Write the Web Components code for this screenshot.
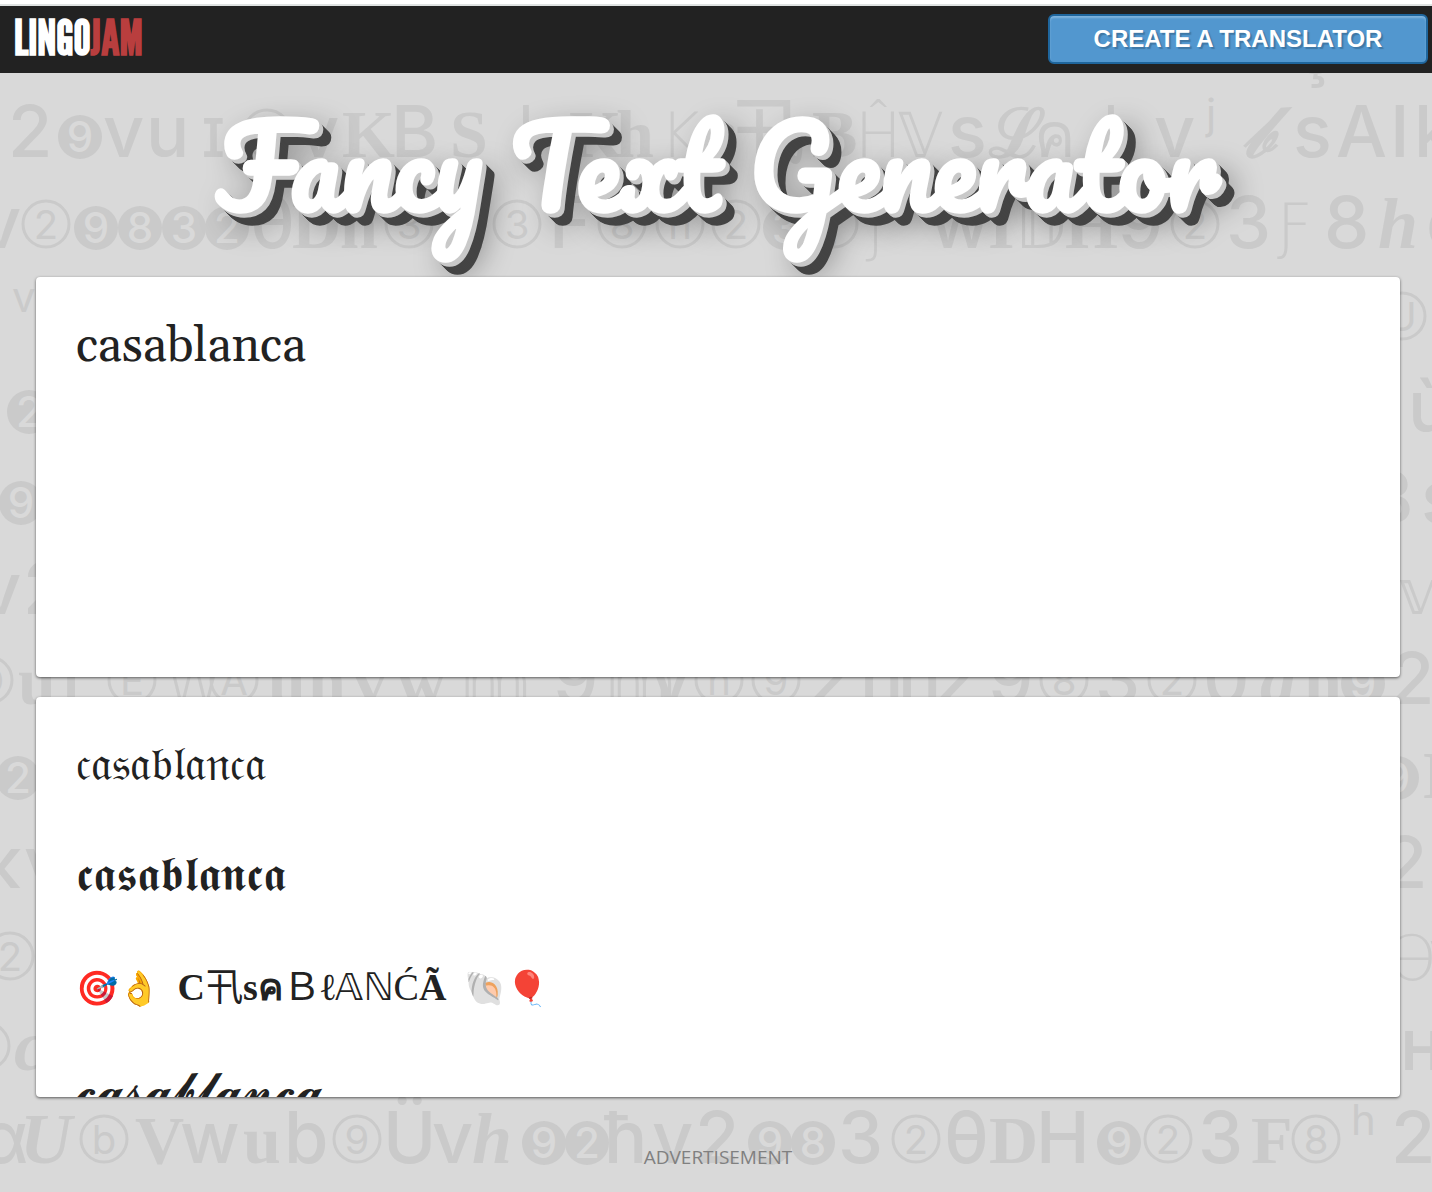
<!DOCTYPE html>
<html lang="en">
<head>
<meta charset="utf-8">
<title>Fancy Text Generator</title>
<style>
  body {
    margin: 0;
    background: #d9d9d9;
    color: #222;
    font-family: "Liberation Sans", Arial, sans-serif;
  }
</style>
</head>
<body>
<lingo-page>
  <lingo-header slot="header"></lingo-header>
  <fancy-title>Fancy Text Generator</fancy-title>
  <text-input value="casablanca"></text-input>
  <text-output>
    <fancy-line>𝔠𝔞𝔰𝔞𝔟𝔩𝔞𝔫𝔠𝔞</fancy-line>
    <fancy-line>𝖈𝖆𝖘𝖆𝖇𝖑𝖆𝖓𝖈𝖆</fancy-line>
    <fancy-line kind="mixed"><i>🎯👌</i> <b>C</b>卂<b>sค</b>Ｂ<b>ℓ</b>𝔸ℕĆ<b>Ã</b> <i>🐚🎈</i></fancy-line>
    <fancy-line kind="script">𝓬𝓪𝓼𝓪𝓫𝓵𝓪𝓷𝓬𝓪</fancy-line>
  </text-output>
  <ad-label>ADVERTISEMENT</ad-label>
</lingo-page>

<script>
// each row: [baseline, "x glyph style" ...]
// styles: s sans, b bold serif, i bold italic serif, t thin, o circled, f filled circle, u superscript
const ROWS = [
  [73, "1296 ş s"],
  [157, "8 2 s|58 9 f|103 v s|146 u s|200 ɪ s|243 D o|298 v s|342 K b|391 B s|450 S b|516 | s|569 K b|616 h b|660 K t|704 ę i|732 卂 s|812 B b|855 Ĥ t|898 𝕍 t|948 s s|989 ℒ b|1034 ค t|1101 | s|1154 v s|1206 j u|1242 𝒷 i|1293 s s|1336 A s|1390 I s|1414 k s"],
  [248, "-20 v s|22 2 o|74 9 f|118 8 f|162 3 f|205 2 f|250 θ s|292 D b|340 h b|385 3 o|440 Z s|493 3 o|549 F s|598 8 o|656 n o|712 2 o|763 3 f|810 j o|866 ƒ t|930 w s|988 I b|1015 𝔻 t|1065 H b|1118 9 s|1171 2 o|1226 3 s|1277 Ƒ t|1324 8 s|1378 h i|1426 o s"],
  [340, "-16 j u|12 v u|1378 U o"],
  [432, "7 2 f|1408 ù s"],
  [523, "-1 9 f|1366 B s|1421 s s"],
  [614, "-20 v s|23 2 s|1398 𝕧 t"],
  [704, "-35 O o|18 u b|62 ı s|108 E o|164 W t|210 A o|268 u b|308 n b|353 v b|397 w b|460 𝕞 t|515 ˜ s|553 9 s|605 𝕞 t|650 v s|695 n o|752 9 o|808 2 s|860 h s|898 n s|934 2 s|988 9 s|1040 8 o|1095 3 s|1148 2 o|1203 0 s|1260 a i|1304 n b|1341 9 f|1390 2 s"],
  [798, "-4 2 f|1375 9 f|1422 I b"],
  [888, "-18 κ s|24 v s|1383 2 s|1430 - s"],
  [980, "-14 2 o|1388 Ə t|1429 v s"],
  [1070, "-38 D o|14 c i|1400 ʜ s"],
  [1163, "-20 α s|20 U i|80 b o|135 V b|180 w s|243 u b|284 b s|333 9 o|383 Ü s|432 v s|472 h i|522 9 f|565 2 f|604 ħ s|652 v s|695 2 s|748 9 f|791 8 f|838 3 s|892 2 o|944 θ s|989 D b|1036 H s|1097 9 f|1144 2 o|1198 3 s|1251 F b|1292 8 o|1351 h u|1391 2 s"],
];

class GlyphBackdrop extends HTMLElement {
  constructor() {
    super();
    this.attachShadow({mode: "open"});
  }

  glyph(item, y) {
    const parts = item.trim().split(" ");
    const x = Number(parts[0]);
    if (parts[2] === "o") {
      return `<circle class="ring" cx="${x + 24}" cy="${y - 24}" r="23"/>
        <text class="in" x="${x + 24}" y="${y - 9}">${parts[1]}</text>`;
    }
    if (parts[2] === "f") {
      return `<circle cx="${x + 22}" cy="${y - 20}" r="22"/>
        <text class="out" x="${x + 22}" y="${y - 5}">${parts[1]}</text>`;
    }
    const top = parts[2] === "u" ? y - 28 : y;
    return `<text class="${parts[2]}" x="${x}" y="${top}">${parts[1]}</text>`;
  }

  connectedCallback() {
    const art = ROWS.map(([y, row]) => {
      // the bar glyph is also the separator, so it is swapped first
      const items = row.replace(/(\d+) \| s/g, "$1 ǀ s").split("|");
      return items.map((item) => this.glyph(item, y)).join("");
    }).join("");
    this.shadowRoot.innerHTML = `
      <style>
        :host {
          display: block;
          position: absolute;
          inset: 0;
          overflow: hidden;
          pointer-events: none;
          z-index: -1;
        }
        svg { display: block; overflow: visible; }
        svg * { fill: #cacaca; }
        text { font: 500 72px Inter, "DejaVu Sans", "Noto Sans CJK SC", sans-serif; }
        .b { font-family: "Liberation Serif", serif; font-weight: bold; font-size: 68px; }
        .i { font-family: "Liberation Serif", serif; font-weight: bold; font-style: italic; font-size: 72px; }
        .t { font-family: "DejaVu Sans", sans-serif; font-weight: 200; font-size: 62px; }
        .u { font-size: 42px; font-weight: 400; }
        .in { font-size: 40px; font-weight: 400; text-anchor: middle; }
        svg .out { font-size: 42px; text-anchor: middle; fill: #d9d9d9; }
        svg .ring { fill: none; stroke: #cacaca; stroke-width: 3; }
      </style>
      <svg width="1432" height="1192" aria-hidden="true">${art}</svg>
    `;
  }
}

class LingoPage extends HTMLElement {
  constructor() {
    super();
    this.attachShadow({mode: "open"});
  }
  connectedCallback() {
    this.shadowRoot.innerHTML = `
      <style>
        :host {
          display: block;
          position: relative;
          min-height: 100vh;
          overflow: hidden;
          z-index: 0;
        }
        main {
          display: flex;
          flex-direction: column;
          gap: 20px;
          padding: 0 32px 20px 36px;
        }
      </style>
      <glyph-backdrop></glyph-backdrop>
      <slot name="header"></slot>
      <main><slot></slot></main>
    `;
  }
}

class LingoHeader extends HTMLElement {
  constructor() {
    super();
    this.attachShadow({mode: "open"});
  }
  connectedCallback() {
    this.shadowRoot.innerHTML = `
      <style>
        :host {
          display: block;
          border-top: 4px solid #fff;
        }
        header {
          box-sizing: border-box;
          height: 69px;
          padding: 0 4px 0 14px;
          border-top: 2px solid #dfe3e2;
          background: #222;
          display: flex;
          align-items: center;
          justify-content: space-between;
        }
        a { text-decoration: none; color: #fff; }
        .logo {
          padding-bottom: 4px;
          font: bold 48px/60px "League Gothic", "Bebas Neue", Anton, Oswald, Impact, "Fjalla One", "Roboto Condensed", "Open Sans Condensed", sans-serif;
        }
        .logo span { color: #b93e3e; }
        .create {
          box-sizing: border-box;
          width: 380px;
          height: 50px;
          margin-bottom: 1px;
          border: 2px solid #1f669d;
          border-radius: 6px;
          background: #5297cf;
          box-shadow: inset 0 2px 2px #7fb3de;
          font-size: 24px;
          line-height: 46px;
          font-weight: bold;
          text-align: center;
          text-shadow: 2px 2px 1px #3f78a6;
        }
      </style>
      <header>
        <a class="logo" href="#">LINGO<span>JAM</span></a>
        <a class="create" href="#create">CREATE A TRANSLATOR</a>
      </header>
    `;
  }
}

class FancyTitle extends HTMLElement {
  constructor() {
    super();
    this.attachShadow({mode: "open"});
  }
  shadows() {
    const list = [];
    for (let i = 1; i <= 12; i++) {
      list.push(`${i}px ${i}px 0 ${i <= 4 ? "#c9c9c9" : "#444"}`);
    }
    list.push("12px 12px 30px rgba(0, 0, 0, 0.4)");
    return list.join(", ");
  }
  connectedCallback() {
    this.shadowRoot.innerHTML = `
      <style>
        :host { display: block; }
        h1 {
          margin: 0;
          padding: 12px 0;
          font: bold 108px/160px Pacifico, cursive;
          text-align: center;
          color: #fff;
          text-shadow: ${this.shadows()};
        }
      </style>
      <h1><slot></slot></h1>
    `;
  }
}

const CARD = `
  box-sizing: border-box;
  width: 100%;
  height: 400px;
  border: 0;
  border-radius: 4px;
  background: #fff;
  color: #222;
  box-shadow: 0 1px 3px rgba(0, 0, 0, 0.6);
`;

class TextInput extends HTMLElement {
  constructor() {
    super();
    this.attachShadow({mode: "open"});
  }
  connectedCallback() {
    this.shadowRoot.innerHTML = `
      <style>
        :host { display: block; }
        textarea {
          ${CARD}
          display: block;
          padding: 40px;
          outline: 0;
          resize: none;
          font: 48px/60px Georgia, Gelasio, "Liberation Serif", serif;
        }
      </style>
      <textarea aria-label="Your text" spellcheck="false"></textarea>
    `;
    this.shadowRoot.querySelector("textarea").value = this.getAttribute("value");
  }
}

class TextOutput extends HTMLElement {
  constructor() {
    super();
    this.attachShadow({mode: "open"});
  }
  connectedCallback() {
    this.shadowRoot.innerHTML = `
      <style>
        :host {
          ${CARD}
          display: flex;
          flex-direction: column;
          gap: 55px;
          padding: 40px;
          overflow: hidden;
        }
      </style>
      <slot></slot>
    `;
  }
}

class FancyLine extends HTMLElement {
  constructor() {
    super();
    this.attachShadow({mode: "open"});
  }
  connectedCallback() {
    this.shadowRoot.innerHTML = `
      <style>
        :host {
          display: block;
          flex: none;
          height: 56px;
          font: 48px/54px "Liberation Serif", "DejaVu Sans", "Noto Sans CJK SC", serif;
          white-space: nowrap;
        }
        :host([kind="mixed"]) { font-size: 38px; line-height: 56px; }
        :host([kind="script"]) { line-height: 40px; }
        ::slotted(i) {
          display: inline-block;
          font-size: 34px;
          font-style: normal;
          margin-right: 8px;
        }
        ::slotted(i:last-child) { margin: 0 0 0 8px; }
        ::slotted(b) { font-weight: bold; }
      </style>
      <slot></slot>
    `;
  }
}

class AdLabel extends HTMLElement {
  constructor() {
    super();
    this.attachShadow({mode: "open"});
  }
  connectedCallback() {
    this.shadowRoot.innerHTML = `
      <style>
        :host {
          display: block;
          padding-top: 28px;
          font: 19px/24px "Open Sans", "Noto Sans", sans-serif;
          text-align: center;
          color: #808080;
        }
      </style>
      <slot></slot>
    `;
  }
}

window.customElements.define("glyph-backdrop", GlyphBackdrop);
window.customElements.define("lingo-page", LingoPage);
window.customElements.define("lingo-header", LingoHeader);
window.customElements.define("fancy-title", FancyTitle);
window.customElements.define("text-input", TextInput);
window.customElements.define("text-output", TextOutput);
window.customElements.define("fancy-line", FancyLine);
window.customElements.define("ad-label", AdLabel);
</script>
</body>
</html>
